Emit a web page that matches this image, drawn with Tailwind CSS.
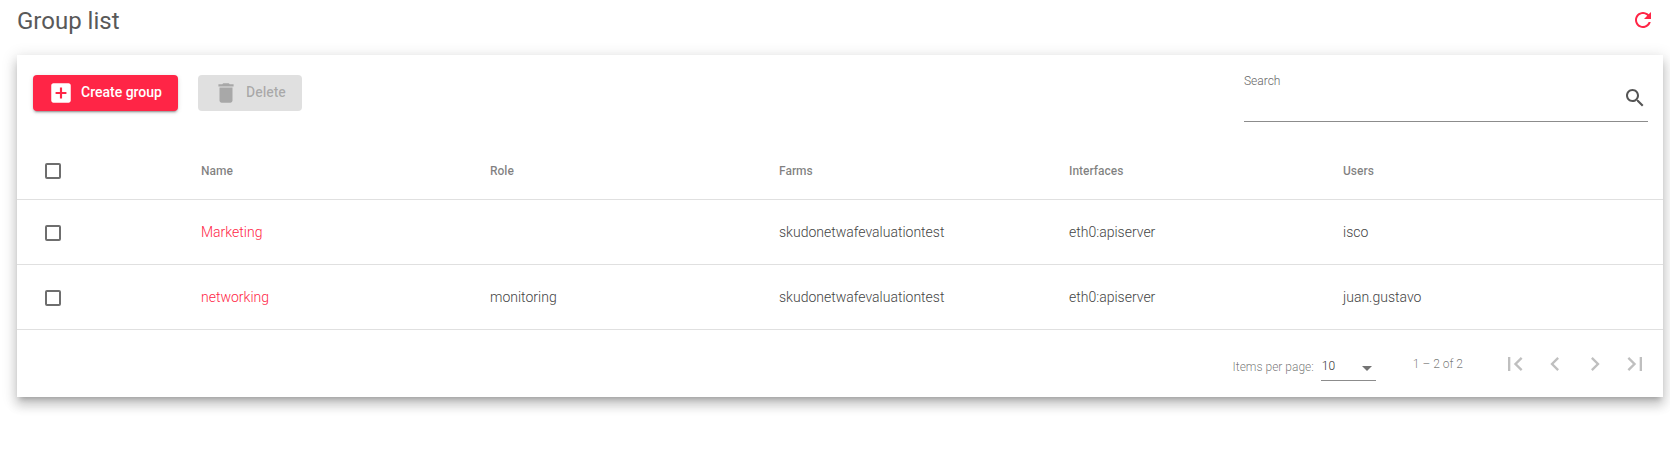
<!DOCTYPE html>
<html lang="en">
<head>
    <meta charset="UTF-8">
    <title>Group list</title>
    <script src="https://cdn.jsdelivr.net/npm/@tailwindcss/browser@4"></script>
</head>
<body class="bg-white font-['Roboto',sans-serif] overflow-hidden">

<div class="w-[1670px] h-[454px] pl-[17px] pr-[7px]">
    <!-- Page title -->
    <div class="flex items-center justify-between h-[55px] pb-[13px]">
        <h1 class="text-[24px] leading-[42px] font-normal text-[#595959]">Group list</h1>
        <svg class="w-[24px] h-[24px] mr-[8px] mb-[2px] fill-[#ff2546]" viewBox="0 0 24 24"><path d="M17.65 6.35C16.2 4.9 14.21 4 12 4c-4.42 0-7.99 3.58-7.99 8s3.57 8 7.99 8c3.73 0 6.84-2.55 7.73-6h-2.08c-.82 2.33-3.04 4-5.65 4-3.31 0-6-2.69-6-6s2.69-6 6-6c1.66 0 3.14.69 4.22 1.78L13 11h7V4l-2.35 2.35z"/></svg>
    </div>

    <!-- Card -->
    <div class="bg-white h-[342px] shadow-[0_5px_5px_-3px_rgba(0,0,0,0.2),0_8px_10px_1px_rgba(0,0,0,0.14),0_3px_14px_2px_rgba(0,0,0,0.12)]">
        <!-- Toolbar -->
        <div class="flex h-[87px] pl-[16px] pr-[15px] pt-[20px]">
            <button class="flex items-center h-[36px] w-[145px] pl-[15px] rounded-[4px] bg-[#ff2546] text-white text-[14px] font-medium shadow-[0_3px_1px_-2px_rgba(0,0,0,0.2),0_2px_2px_0_rgba(0,0,0,0.14),0_1px_5px_0_rgba(0,0,0,0.12)]">
                <svg class="w-[26px] h-[26px] fill-white mr-[7px]" viewBox="0 0 24 24"><path d="M19 3H5c-1.11 0-2 .9-2 2v14c0 1.1.89 2 2 2h14c1.1 0 2-.9 2-2V5c0-1.1-.9-2-2-2zm-2 10h-4v4h-2v-4H7v-2h4V7h2v4h4v2z"/></svg>
                <span class="mb-[2px]">Create group</span>
            </button>
            <button class="flex items-center h-[36px] w-[104px] ml-[20px] pl-[15px] rounded-[4px] bg-[#e0e0e0] text-black/25 text-[14px] font-medium">
                <svg class="w-[26px] h-[26px] fill-black/25 mr-[7px]" viewBox="0 0 24 24"><path d="M6 19c0 1.1.9 2 2 2h8c1.1 0 2-.9 2-2V7H6v12zM19 4h-3.5l-1-1h-5l-1 1H5v2h14V4z"/></svg>
                <span class="mb-[2px]">Delete</span>
            </button>
            <div class="relative ml-auto w-[404px] h-[47px] border-b border-[#8c8c8c]">
                <span class="block text-[12px] font-light text-[#666] leading-[14px] -mt-[1px]">Search</span>
                <svg class="absolute right-[1px] bottom-[11px] w-[24px] h-[24px] fill-[#555]" viewBox="0 0 24 24"><path d="M15.5 14h-.79l-.28-.27C15.41 12.59 16 11.11 16 9.5 16 5.91 13.09 3 9.5 3S3 5.91 3 9.5 5.91 16 9.5 16c1.61 0 3.09-.59 4.23-1.57l.27.28v.79l5 4.99L20.49 19l-4.99-5zm-6 0C7.01 14 5 11.99 5 9.5S7.01 5 9.5 5 14 7.01 14 9.5 11.99 14 9.5 14z"/></svg>
            </div>
        </div>

        <!-- Table header -->
        <div class="grid grid-cols-[184px_289px_289px_290px_274px_1fr] items-center h-[58px] border-b border-[#e0e0e0] text-[12px] font-medium text-black/50">
            <div class="pl-[28px]"><div class="w-[16px] h-[16px] border-2 border-[#6e6e6e] rounded-[2px]"></div></div>
            <div>Name</div>
            <div>Role</div>
            <div>Farms</div>
            <div>Interfaces</div>
            <div>Users</div>
        </div>

        <!-- Rows -->
        <div class="grid grid-cols-[184px_289px_289px_290px_274px_1fr] items-center h-[65px] border-b border-[#e0e0e0] text-[14px] font-light text-[#444]">
            <div class="pl-[28px] pt-[2px]"><div class="w-[16px] h-[16px] border-2 border-[#6e6e6e] rounded-[2px]"></div></div>
            <div class="text-[#ff2546]">Marketing</div>
            <div></div>
            <div>skudonetwafevaluationtest</div>
            <div>eth0:apiserver</div>
            <div>isco</div>
        </div>
        <div class="grid grid-cols-[184px_289px_289px_290px_274px_1fr] items-center h-[65px] border-b border-[#e0e0e0] text-[14px] font-light text-[#444]">
            <div class="pl-[28px] pt-[2px]"><div class="w-[16px] h-[16px] border-2 border-[#6e6e6e] rounded-[2px]"></div></div>
            <div class="text-[#ff2546]">networking</div>
            <div>monitoring</div>
            <div>skudonetwafevaluationtest</div>
            <div>eth0:apiserver</div>
            <div>juan.gustavo</div>
        </div>

        <!-- Paginator -->
        <div class="flex items-center justify-end h-[67px] pr-[6px] text-[12px] font-light text-black/55">
            <span class="mr-[7px] mt-[6px]">Items per page:</span>
            <div class="relative w-[55px] h-[32px] pl-[1px] border-b border-[#8c8c8c] mt-[2px] text-[#333] leading-[34px] text-[12px] font-light">
                10
                <span class="absolute right-[4px] top-[17px] w-0 h-0 border-x-[5px] border-t-[5px] border-x-transparent border-t-black/55"></span>
            </div>
            <span class="ml-[37px] mr-[38px] mt-[1px]">1 – 2 of 2</span>
            <div class="flex gap-[12px] mt-[1px] mr-[8px]">
                <svg class="w-[28px] h-[28px] fill-black/25" viewBox="0 0 24 24"><path d="M18.41 16.59L13.82 12l4.59-4.59L17 6l-6 6 6 6zM6 6h2v12H6z"/></svg>
                <svg class="w-[28px] h-[28px] fill-black/25" viewBox="0 0 24 24"><path d="M15.41 7.41L14 6l-6 6 6 6 1.41-1.41L10.83 12z"/></svg>
                <svg class="w-[28px] h-[28px] fill-black/25" viewBox="0 0 24 24"><path d="M10 6L8.59 7.41 13.17 12l-4.58 4.59L10 18l6-6z"/></svg>
                <svg class="w-[28px] h-[28px] fill-black/25" viewBox="0 0 24 24"><path d="M5.59 7.41L10.18 12l-4.59 4.59L7 18l6-6-6-6zM16 6h2v12h-2z"/></svg>
            </div>
        </div>
    </div>
</div>

</body>
</html>
